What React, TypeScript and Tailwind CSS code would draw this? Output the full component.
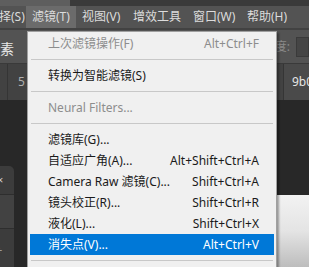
import React from "react";

type Item = { label: string; shortcut?: string; disabled?: boolean; active?: boolean } | "sep";

const items: Item[] = [
  { label: "上次滤镜操作(F)", shortcut: "Alt+Ctrl+F", disabled: true },
  "sep",
  { label: "转换为智能滤镜(S)" },
  "sep",
  { label: "Neural Filters...", disabled: true },
  "sep",
  { label: "滤镜库(G)..." },
  { label: "自适应广角(A)...", shortcut: "Alt+Shift+Ctrl+A" },
  { label: "Camera Raw 滤镜(C)...", shortcut: "Shift+Ctrl+A" },
  { label: "镜头校正(R)...", shortcut: "Shift+Ctrl+R" },
  { label: "液化(L)...", shortcut: "Shift+Ctrl+X" },
  { label: "消失点(V)...", shortcut: "Alt+Ctrl+V", active: true },
  "sep",
];

const font = { fontFamily: '"Noto Sans", "Noto Sans CJK SC", sans-serif' };

export default function App() {
  return (
    <div className="relative w-[309px] h-[267px] overflow-hidden bg-[#282828] text-[12px]" style={font}>
      {/* top strip */}
      <div className="flex h-[6px] bg-[#3a3a3a]">
        <div className="w-[70px] bg-[#5e5e5e]" />
      </div>
      {/* menu bar */}
      <div className="flex h-[22px] items-center bg-[#535353] text-[#dcdcdc] whitespace-nowrap">
        <div className="w-[27px] -ml-[1px]">择(S)</div>
        <div className="flex h-full w-[50px] items-center bg-[#6b6b6b] pl-[6px]">滤镜(T)</div>
        <div className="w-[51px] pl-[6px]">视图(V)</div>
        <div className="w-[60px] pl-[6px]">增效工具</div>
        <div className="w-[54px] pl-[6px]">窗口(W)</div>
        <div className="w-[51px] pl-[6px]">帮助(H)</div>
      </div>
      <div className="h-[2px] bg-[#424242]" />
      {/* options bar */}
      <div className="flex h-[34px] items-center justify-between bg-[#535353] border-b border-[#3a3a3a]">
        <span className="text-[14px] text-[#e6e6e6] pt-[4px]">素</span>
        <div className="flex items-center gap-[6px]">
          <span className="text-[#8a8a8a] text-[12px]">度:</span>
          <div className="w-[13px] h-[20px] bg-[#454545] border border-[#3a3a3a]" />
        </div>
      </div>
      {/* tab bar */}
      <div className="flex h-[36px] items-center justify-between bg-[#424242]">
        <div className="flex h-full items-center">
          <div className="w-[8px] h-full border-r border-[#353535]" />
          <span className="pl-[10px] text-[#b0b0b0]">5</span>
        </div>
        <div className="flex h-full w-[26px] items-center border-l border-[#353535] bg-[#4a4a4a] pl-[8px] text-[#e6e6e6] whitespace-nowrap">
          9b0
        </div>
      </div>
      {/* work area */}
      <div className="flex h-[167px]">
        <div className="w-[27px] flex flex-col pt-[66px]">
          <div className="w-[14px] flex-1 rounded-tr-[5px] bg-[#3c3c3c] flex flex-col">
            <div className="h-[29px] flex items-center text-[#cfcfcf] text-[11px] -ml-[3px] border-b border-[#2e2e2e]">×</div>
            <div className="h-[34px] bg-[#424242] border-b border-[#2e2e2e]" />
            <div className="flex-1 text-[#9a9a9a] text-[11px] -ml-[4px] pt-[14px]">÷</div>
          </div>
        </div>
        <div className="flex-1" />
        <div className="w-[32px] flex flex-col">
          <div className="h-[95px]" />
          <div className="flex-1 bg-gradient-to-b from-[#f2f2f2] via-[#e4e4e4] to-[#bdbdbd]" />
        </div>
      </div>

      {/* dropdown */}
      <div className="absolute left-[27px] top-[31px] w-[250px] bg-[#f0f0f0] border border-[#a0a0a0] shadow-[2px_2px_2px_rgba(0,0,0,0.35)] pt-[1px] pb-[2px] px-[2px]">
        {items.map((it, i) =>
          it === "sep" ? (
            <div key={i} className="h-[11px] flex items-center px-[1px]">
              <div className="h-px w-full bg-[#c8c8c8]" />
            </div>
          ) : (
            <div
              key={i}
              className={
                "flex h-[21px] items-center justify-between pl-[18px] pr-[15px] whitespace-nowrap " +
                (it.active ? "bg-[#0078d7] text-white" : it.disabled ? "text-[#8d8d8d]" : "text-[#1a1a1a]")
              }
            >
              <span>{it.label}</span>
              {it.shortcut && <span>{it.shortcut}</span>}
            </div>
          )
        )}
      </div>
    </div>
  );
}
